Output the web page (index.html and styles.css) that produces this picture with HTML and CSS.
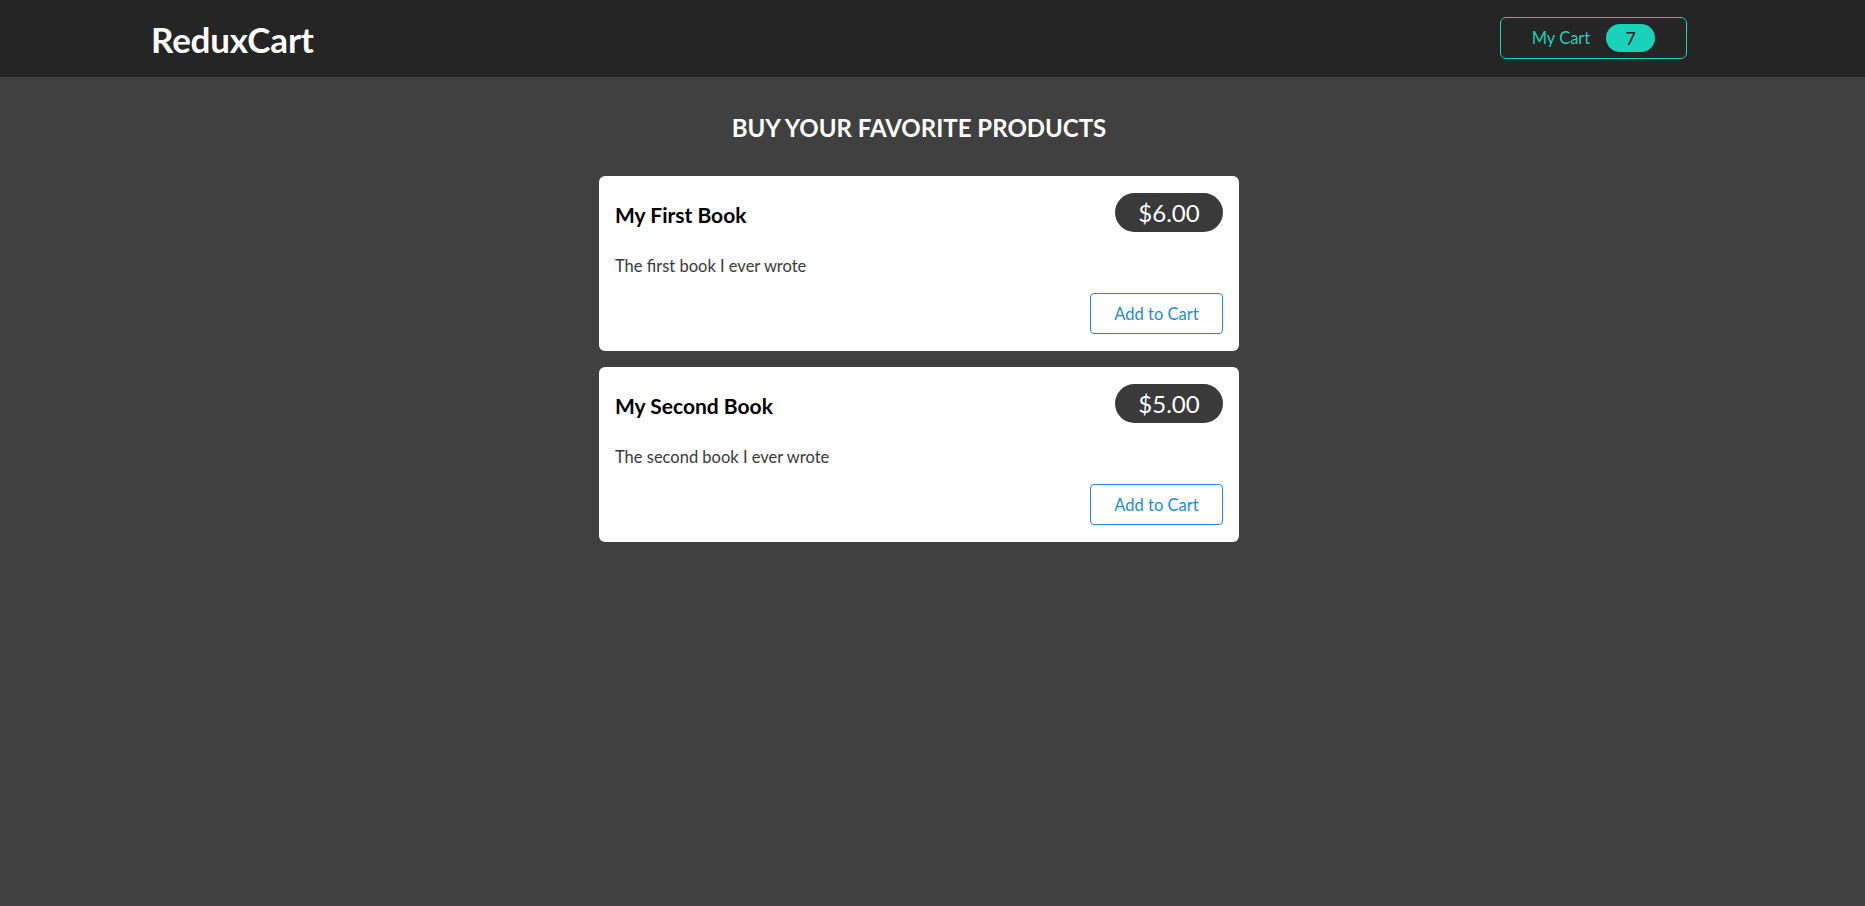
FILE: index.html
```html
<!DOCTYPE html>
<html lang="en">
<head>
<meta charset="utf-8">
<title>ReduxCart</title>
<link rel="stylesheet" href="styles.css">
</head>
<body>
<header class="header">
  <h1 class="logo">ReduxCart</h1>
  <button class="cart-button">
    <span>My Cart</span>
    <span class="badge">7</span>
  </button>
</header>
<main class="main">
  <section class="products">
    <h2 class="products-title">BUY YOUR FAVORITE PRODUCTS</h2>
    <ul class="product-list">
      <li class="card">
        <div class="card-head">
          <h3 class="card-title">My First Book</h3>
          <div class="price">$6.00</div>
        </div>
        <p class="card-desc">The first book I ever wrote</p>
        <div class="card-actions">
          <button class="add-btn">Add to Cart</button>
        </div>
      </li>
      <li class="card">
        <div class="card-head">
          <h3 class="card-title">My Second Book</h3>
          <div class="price">$5.00</div>
        </div>
        <p class="card-desc">The second book I ever wrote</p>
        <div class="card-actions">
          <button class="add-btn">Add to Cart</button>
        </div>
      </li>
    </ul>
  </section>
</main>
</body>
</html>
```
FILE: styles.css
```css
* { box-sizing: border-box; }
html, body {
  margin: 0;
  padding: 0;
}
body {
  background: #404040;
  font-family: Lato, "Open Sans", sans-serif;
  min-height: 906px;
}
.header {
  height: 77px;
  background: #252525;
  display: flex;
  align-items: center;
  justify-content: space-between;
  padding: 0 178px 0 151px;
}
.logo {
  margin: 0;
  color: #fff;
  font-size: 35px;
  font-weight: 700;
  letter-spacing: -0.2px;
}
.cart-button {
  width: 187px;
  height: 42px;
  margin-bottom: 2px;
  background: transparent;
  border: 1px solid #1ad1b9;
  border-radius: 6px;
  color: #1ad1b9;
  font-family: inherit;
  font-size: 16.5px;
  display: flex;
  align-items: center;
  justify-content: center;
  gap: 16px;
  padding: 0;
}
.badge {
  background: #1ad1b9;
  color: #1d1d1d;
  border-radius: 30px;
  width: 49px;
  height: 28px;
  display: flex;
  align-items: center;
  justify-content: center;
  font-size: 18px;
}
.main {
  padding: 0 0 0 599px;
}
.products {
  width: 640px;
}
.products-title {
  margin: 0;
  padding-top: 36px;
  height: 99px;
  text-align: center;
  color: #fff;
  font-size: 24px;
  font-weight: 700;
}
.product-list {
  list-style: none;
  margin: 0;
  padding: 0;
  display: flex;
  flex-direction: column;
  gap: 16px;
}
.card {
  background: #fff;
  border-radius: 6px;
  padding: 17px 16px;
  height: 175px;
}
.card-head {
  display: flex;
  justify-content: space-between;
  align-items: center;
  height: 39px;
}
.card-title {
  margin: 0;
  padding-top: 4px;
  font-size: 21px;
  font-weight: 700;
  color: #000;
}
.price {
  background: #3a3a3a;
  color: #fff;
  border-radius: 20px;
  width: 108px;
  height: 39px;
  display: flex;
  align-items: center;
  justify-content: center;
  font-size: 24px;
}
.card-desc {
  margin: 0;
  padding-top: 24px;
  height: 61px;
  font-size: 16.5px;
  color: #3a3a3a;
}
.card-actions {
  display: flex;
  justify-content: flex-end;
}
.add-btn {
  width: 133px;
  height: 41px;
  background: #fff;
  border: 1px solid #1a8ed1;
  border-radius: 4px;
  color: #1a8ed1;
  font-family: inherit;
  font-size: 16.5px;
}
```
